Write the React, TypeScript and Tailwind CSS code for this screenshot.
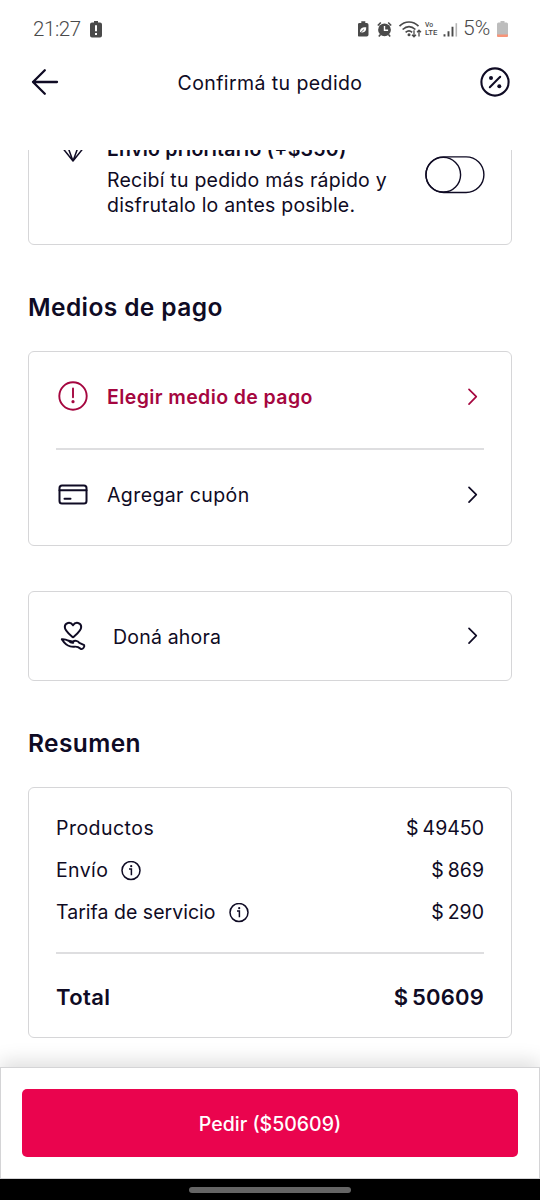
import React from "react";

type IconProps = { className?: string };

const Chevron = ({ className = "" }: IconProps) => (
  <svg className={className} width="12" height="20" viewBox="0 0 12 20" fill="none" stroke="currentColor" strokeWidth="1.7" strokeLinecap="round" strokeLinejoin="round">
    <path d="M2 2.3 9.3 9.7 2 17.1" />
  </svg>
);

const InfoIcon = () => (
  <svg className="-mt-px" width="20" height="20" viewBox="0 0 20 20" fill="none" stroke="currentColor" strokeWidth="1.5">
    <circle cx="10" cy="9.500" r="9" />
    <path d="M8 8h2.4v6.2" />
    <circle cx="10.2" cy="5.2" r="1.1" fill="currentColor" stroke="none" />
  </svg>
);

const StatusBar = () => (
  <div className="flex h-[58px] shrink-0 items-center justify-between pl-[33px] pr-[32px] font-['Roboto',sans-serif] text-[20.5px] font-light text-[#4a4a4a]">
    <div className="flex items-center gap-[9px]">
      <span className="w-[48px] whitespace-nowrap tracking-[-0.4px]">21:27</span>
      <svg width="12" height="17" viewBox="0 0 12 17">
        <path d="M4 0h4v1.5h2A2 2 0 0 1 12 3.5v11a2 2 0 0 1-2 2H2a2 2 0 0 1-2-2v-11a2 2 0 0 1 2-2h2z" fill="#4a4a4a" />
        <path d="M6 4.2v6M6 12v2" stroke="#fff" strokeWidth="2" />
      </svg>
    </div>
    <div className="flex items-center">
      <svg width="105" height="20" viewBox="1 0 105 20" fill="none" stroke="#4a4a4a">
        <path d="M4.3 2.2h4V4h1.4A1.8 1.8 0 0 1 11.5 5.8v10A1.8 1.8 0 0 1 9.7 17.6H2.5A1.8 1.8 0 0 1 .7 15.8v-10A1.8 1.8 0 0 1 2.5 4h1.8z" fill="#4a4a4a" stroke="none" />
        <path d="M3.2 13.8C2.5 9.5 5 8 9.2 8.2 9.5 12 7.5 14.2 3.8 13.2z" fill="#fff" stroke="none" />
        <path d="M2.5 14.6 7 10.5" strokeWidth=".8" />
        <circle cx="27.500" cy="10.800" r="6.400" fill="#4a4a4a" stroke="none" />
        <path d="M20.800 6.500l3-3M34.200 6.500l-3-3M23.500 15.500l-1.700 2M31.500 15.500l1.700 2" strokeWidth="1.600" />
        <path d="M27.500 7v4.200h3.600" stroke="#fff" strokeWidth="1.400" />
        <path d="M42.500 7.200c5.500-5.600 13.500-5.600 19 0M45.600 10.500c4-3.700 8.800-3.700 12.800 0M48.600 13.300c2.200-1.900 4.600-1.900 6.500 0" strokeWidth="1.700" />
        <circle cx="52" cy="15.800" r="1.500" fill="#4a4a4a" stroke="none" />
        <path d="M57 11.200v6.500M55 15.800l2 2 2-2M62 17.500v-6.200M60 13.200l2-2 2 2" strokeWidth="1.300" />
        <g fill="#4a4a4a" stroke="none" fontFamily="Roboto, sans-serif" fontWeight="500">
          <text x="68" y="8" fontSize="6.800">Vo</text>
          <text x="68" y="16.200" fontSize="7.800" textLength="12.500">LTE</text>
        </g>
        <path d="M87.500 15.300v2.300M91.500 12.300v5.300M95.500 7.800v9.800" strokeWidth="1.900" />
        <path d="M99.300 4.200v13.400" stroke="#b5b5b5" strokeWidth="1.600" />
      </svg>
      <span className="w-[31px] whitespace-nowrap text-[21px] tracking-[0.200px]">5%</span>
      <svg className="ml-[3px]" width="11" height="16" viewBox="0 0 11 16">
        <path d="M3.500 0h4v1.500H9.500A1.500 1.500 0 0 1 11 3v11.500A1.500 1.500 0 0 1 9.500 16h-8A1.500 1.500 0 0 1 0 14.500V3a1.500 1.500 0 0 1 1.500-1.500h2z" fill="#bdbdbd" />
        <path d="M0 13.500h11v1A1.500 1.500 0 0 1 9.500 16h-8A1.500 1.500 0 0 1 0 14.500z" fill="#f89478" />
      </svg>
    </div>
  </div>
);

const Header = () => (
  <div className="flex h-[50px] shrink-0 items-center justify-between pl-[31px] pr-[30px]">
    <svg className="-mt-[2px]" width="28" height="28" viewBox="0 0 28 28" fill="none" stroke="currentColor" strokeWidth="2.300" strokeLinecap="round" strokeLinejoin="round">
      <path d="M26 14H2M13.800 2.200 2 14l11.800 11.800" />
    </svg>
    <h1 className="ml-px whitespace-nowrap pt-[2px] text-[19.500px] tracking-[0.410px]">Confirmá tu pedido</h1>
    <svg className="-mt-[2px]" width="30" height="30" viewBox="0 0 30 30" fill="none" stroke="currentColor">
      <circle cx="15" cy="15" r="13.600" strokeWidth="2.100" />
      <path d="M20.200 9.800 9.800 20.200" strokeWidth="2" strokeLinecap="round" />
      <circle cx="11" cy="11" r="2" fill="currentColor" stroke="none" />
      <circle cx="19.300" cy="19.300" r="2" fill="currentColor" stroke="none" />
    </svg>
  </div>
);

const ShippingCard = () => (
  <div className="-mt-[40px] flex h-[135px] shrink-0 rounded-[6px] border-[1.500px] border-[#d6d6d8] pl-[29px] pr-[26px]">
    <svg className="mt-[21px] shrink-0" width="30" height="30" viewBox="0 0 30 30" fill="none" stroke="currentColor" strokeWidth="1.500" strokeLinejoin="round">
      <path d="M6 8h18l3 6-12 15L3 14zM3 14h24M9.500 14l5.500 15 5.500-15" />
    </svg>
    <div className="ml-[19px] mt-[26px] flex-1 whitespace-nowrap text-[19.500px] leading-[25.500px]">
      <p className="mb-[5px] font-semibold tracking-[0.270px]">Envío prioritario (+$350)</p>
      <p className="tracking-[0.240px]">Recibí tu pedido más rápido y</p>
      <p className="tracking-[0.210px]">disfrutalo lo antes posible.</p>
    </div>
    <svg className="mt-[45px]" width="60" height="38" viewBox="0 0 60 38" fill="none" stroke="currentColor" strokeWidth="1.400">
      <rect x=".9" y=".9" width="58" height="35.600" rx="17.800" />
      <circle cx="18.300" cy="18.700" r="17.300" />
    </svg>
  </div>
);

const PaymentCard = () => (
  <div className="mt-[28px] flex h-[195px] shrink-0 flex-col rounded-[6px] border-[1.500px] border-[#d6d6d8] px-[27px] text-[19.500px]">
    <div className="flex h-[90px] items-center pl-[2px] pr-[5px] text-[#a5063f]">
      <svg className="-mt-[2px]" width="30" height="30" viewBox="0 0 30 30" fill="none" stroke="currentColor" strokeWidth="1.900">
        <circle cx="15" cy="15" r="13.700" />
        <path d="M15 7.500v8.800" strokeLinecap="round" />
        <circle cx="15" cy="20.700" r="1.600" fill="currentColor" stroke="none" />
      </svg>
      <span className="ml-[19px] flex-1 whitespace-nowrap pt-[2px] font-semibold tracking-[0.400px]">Elegir medio de pago</span>
      <Chevron />
    </div>
    <div className="mt-[6px] h-[2px] bg-[#dedee0]" />
    <div className="flex h-[90px] items-center pl-[2px] pr-[5px]">
      <svg className="-mt-px" width="30" height="22" viewBox="0 0 30 22" fill="none" stroke="currentColor" strokeWidth="2">
        <rect x="1.500" y="1.500" width="27" height="18" rx="2.500" />
        <path d="M1.500 6.200h27M6.500 14.800h6" strokeLinecap="round" />
      </svg>
      <span className="ml-[19px] flex-1 whitespace-nowrap pt-[2px] tracking-[0.400px]">Agregar cupón</span>
      <Chevron />
    </div>
  </div>
);

const DonationCard = () => (
  <div className="mt-[45px] flex h-[90px] shrink-0 items-center rounded-[6px] border-[1.500px] border-[#d6d6d8] pl-[31px] pr-[32px] text-[19.500px]">
    <svg width="26" height="30" viewBox="0 0 26 30" fill="none" stroke="currentColor" strokeWidth="2" strokeLinecap="round" strokeLinejoin="round">
      <path d="M13 16.300C9 13 4.800 10.100 4.800 6.100 4.800 1.500 10.500.3 13 4.300 15.500.3 21.200 1.500 21.200 6.100c0 4-4.200 6.900-8.200 10.200z" />
      <path d="M1.800 18.300c2.500-.2 4.800.4 7 1.500l4.200.8M1.800 18.300c2.200 3.500 4.700 6.200 8.400 7.100 3.300.8 5.600-.3 7.800.7l3.200 2c1.800.4 3.600-2.700 3-4l-4.800-2.200c-1.800-2.300-4.600-2.800-6.400-1.300M8.800 19.800c1.500 1.800 3 2.200 4.500 1.900" strokeWidth="1.900" />
    </svg>
    <span className="ml-[27px] flex-1 whitespace-nowrap pt-[3px] tracking-[0.200px]">Doná ahora</span>
    <Chevron />
  </div>
);

const SummaryRow = ({ label, amount, labelClass, info = false }: { label: string; amount: string; labelClass: string; info?: boolean }) => (
  <div className="flex h-[42px] items-center justify-between whitespace-nowrap text-[19.500px]">
    <div className="flex items-center gap-[13px]">
      <span className={labelClass}>{label}</span>
      {info && <InfoIcon />}
    </div>
    <span className="[word-spacing:-1.500px]">$ {amount}</span>
  </div>
);

const SummaryCard = () => (
  <div className="mt-[28px] h-[251px] shrink-0 rounded-[6px] border-[1.500px] border-[#d6d6d8] px-[27px] pt-[20px]">
    <SummaryRow label="Productos" amount="49450" labelClass="tracking-[0.470px]" />
    <SummaryRow label="Envío" amount="869" labelClass="tracking-[0.400px]" info />
    <SummaryRow label="Tarifa de servicio" amount="290" labelClass="tracking-[0.020px]" info />
    <div className="mt-[18px] h-[2px] bg-[#dedee0]" />
    <div className="mt-[22px] flex h-[42px] items-center justify-between whitespace-nowrap text-[22px] font-semibold">
      <span className="tracking-[0.400px]">Total</span>
      <span className="tracking-[0.200px] [word-spacing:-2px]">$ 50609</span>
    </div>
  </div>
);

const SectionTitle = ({ className, children }: { className: string; children: React.ReactNode }) => (
  <h2 className={"h-[36px] shrink-0 whitespace-nowrap text-[24.500px] font-semibold " + className}>{children}</h2>
);

export default function App() {
  return (
    <div className="flex h-[1200px] w-[540px] flex-col overflow-hidden bg-white font-['Inter',sans-serif] text-[#0f0b24]">
      <StatusBar />
      <Header />
      <main className="mt-[42px] flex h-[917px] shrink-0 flex-col overflow-hidden px-[28px]">
        <ShippingCard />
        <SectionTitle className="mt-[42px] leading-[40px] tracking-[0.400px]">Medios de pago</SectionTitle>
        <PaymentCard />
        <DonationCard />
        <SectionTitle className="mt-[42px] leading-[40px] tracking-[0.400px]">Resumen</SectionTitle>
        <SummaryCard />
      </main>
      <footer className="flex h-[112px] shrink-0 border-[1.500px] border-[#d4d4d6] bg-white px-[21px] pt-[21px] shadow-[0_-6px_18px_rgba(0,0,0,0.13)]">
        <button className="h-[68px] w-full rounded-[5px] bg-[#ea044e] pt-[3px] text-[19.500px] font-medium text-white">Pedir ($50609)</button>
      </footer>
      <div className="z-10 flex h-[21px] shrink-0 justify-center bg-black pt-[8px]">
        <div className="h-[6px] w-[162px] rounded-full bg-[#666666]" />
      </div>
    </div>
  );
}
